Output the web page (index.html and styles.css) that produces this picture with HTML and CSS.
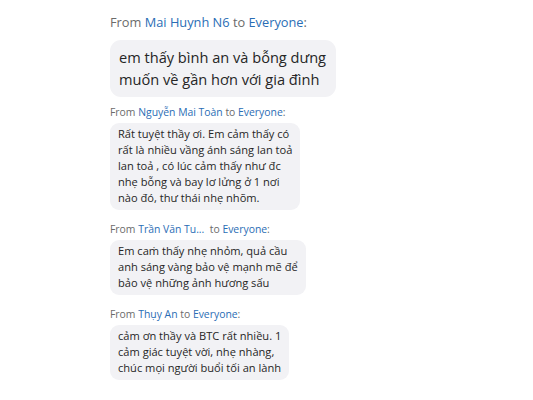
FILE: index.html
```html
<!DOCTYPE html>
<html lang="vi">
<head>
<meta charset="utf-8">
<link rel="stylesheet" href="styles.css">
</head>
<body>
<div class="chat">
  <div class="msg msg-large">
    <div class="meta">From <span class="name">Mai Huynh N6</span> to <span class="name">Everyone</span>:</div>
    <div class="bubble">em thấy bình an và bỗng dưng<br>muốn về gần hơn với gia đình</div>
  </div>
  <div class="msg">
    <div class="meta">From <span class="name">Nguyễn Mai Toàn</span> to <span class="name">Everyone</span>:</div>
    <div class="bubble">Rất tuyệt thầy ơi. Em cảm thấy có<br>rất là nhiều vầng ánh sáng lan toả<br>lan toả , có lúc cảm thấy như đc<br>nhẹ bỗng và bay lơ lửng ở 1 nơi<br>nào đó, thư thái nhẹ nhõm.</div>
  </div>
  <div class="msg">
    <div class="meta">From <span class="name">Trần Văn Tu...</span>&nbsp; to <span class="name">Everyone</span>:</div>
    <div class="bubble">Em caṁ thấy nhẹ nhỏm, quả cầu<br>anh sáng vàng bảo vệ mạnh mẽ để<br>bảo vệ những ảnh hương sấu</div>
  </div>
  <div class="msg">
    <div class="meta">From <span class="name">Thụy An</span> to <span class="name">Everyone</span>:</div>
    <div class="bubble">cảm ơn thầy và BTC rất nhiều. 1<br>cảm giác tuyệt vời, nhẹ nhàng,<br>chúc mọi người buổi tối an lành</div>
  </div>
</div>
</body>
</html>
```

FILE: styles.css
```css
html, body {
  margin: 0;
  padding: 0;
  background: #ffffff;
}

body {
  font-family: "Open Sans", "Noto Sans", sans-serif;
  color: #232323;
}

.chat {
  display: flex;
  flex-direction: column;
  align-items: flex-start;
  padding: 13px 0 0 110px;
}

.msg {
  display: flex;
  flex-direction: column;
  align-items: flex-start;
  gap: 4px;
  padding-bottom: 12px;
}

.meta {
  font-size: 10.4px;
  line-height: 14px;
  color: #6b6b6b;
}

.name {
  color: #2a6db5;
}

.bubble {
  background: #f2f2f5;
  border-radius: 9px;
  padding: 3px 8px 4px 8px;
  font-size: 11.1px;
  line-height: 16px;
  color: #262626;
}

.msg-large {
  gap: 9px;
  padding-bottom: 8px;
}

.msg-large .meta {
  font-size: 12.8px;
  line-height: 18px;
}

.msg-large .bubble {
  font-size: 14.6px;
  line-height: 22px;
  border-radius: 11px;
  padding: 6px 10px 7px 9px;
}
```
